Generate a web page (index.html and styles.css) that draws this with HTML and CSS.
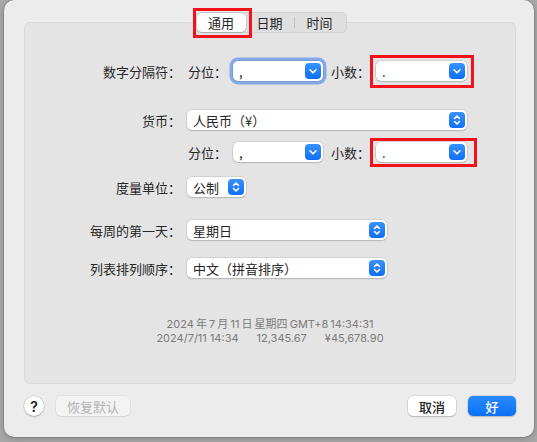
FILE: index.html
```html
<!DOCTYPE html>
<html lang="zh-CN">
<head>
    <meta charset="UTF-8">
    <meta name="viewport" content="width=device-width, initial-scale=1.0">
    <title>语言与地区 - 高级</title>
    <link rel="stylesheet" href="styles.css">
</head>
<body>

    <!-- Sheet -->
    <div class="sheet">

        <!-- Tabs -->
        <div class="tabs">
            <div class="tab tab-active mark">通用</div>
            <div class="tab">日期</div>
            <div class="tab-sep"></div>
            <div class="tab tab-last">时间</div>
        </div>

        <!-- Panel -->
        <div class="panel">

            <div class="row row-1">
                <div class="label">数字分隔符：</div>
                <div class="field">
                    <span class="sub">分位：</span>
                    <div class="select select-focus w-group">
                        <span class="val">,</span>
                        <span class="btn"><svg viewBox="0 0 16 16"><path d="M5 6.8l3 3 3-3"/></svg></span>
                    </div>
                    <span class="sub sub-dec">小数：</span>
                    <div class="select w-dec mark">
                        <span class="val">.</span>
                        <span class="btn"><svg viewBox="0 0 16 16"><path d="M5 6.8l3 3 3-3"/></svg></span>
                    </div>
                </div>
            </div>

            <div class="row row-2">
                <div class="label">货币：</div>
                <div class="field">
                    <div class="select w-currency">
                        <span class="val">人民币（¥）</span>
                        <span class="btn"><svg viewBox="0 0 16 16"><path d="M5.5 6.5L8 4l2.5 2.5M5.5 9.5L8 12l2.5-2.5"/></svg></span>
                    </div>
                </div>
            </div>

            <div class="row row-3">
                <div class="label"></div>
                <div class="field">
                    <span class="sub">分位：</span>
                    <div class="select w-group">
                        <span class="val">,</span>
                        <span class="btn"><svg viewBox="0 0 16 16"><path d="M5 6.8l3 3 3-3"/></svg></span>
                    </div>
                    <span class="sub sub-dec">小数：</span>
                    <div class="select w-dec mark mark-low">
                        <span class="val">.</span>
                        <span class="btn"><svg viewBox="0 0 16 16"><path d="M5 6.8l3 3 3-3"/></svg></span>
                    </div>
                </div>
            </div>

            <div class="row row-4">
                <div class="label">度量单位：</div>
                <div class="field">
                    <div class="select w-unit">
                        <span class="val">公制</span>
                        <span class="btn"><svg viewBox="0 0 16 16"><path d="M5.5 6.5L8 4l2.5 2.5M5.5 9.5L8 12l2.5-2.5"/></svg></span>
                    </div>
                </div>
            </div>

            <div class="row row-5">
                <div class="label">每周的第一天：</div>
                <div class="field">
                    <div class="select w-wide">
                        <span class="val">星期日</span>
                        <span class="btn"><svg viewBox="0 0 16 16"><path d="M5.5 6.5L8 4l2.5 2.5M5.5 9.5L8 12l2.5-2.5"/></svg></span>
                    </div>
                </div>
            </div>

            <div class="row row-6">
                <div class="label">列表排列顺序：</div>
                <div class="field">
                    <div class="select w-wide">
                        <span class="val">中文（拼音排序）</span>
                        <span class="btn"><svg viewBox="0 0 16 16"><path d="M5.5 6.5L8 4l2.5 2.5M5.5 9.5L8 12l2.5-2.5"/></svg></span>
                    </div>
                </div>
            </div>

            <!-- Preview -->
            <div class="preview">
                <div class="preview-line">2024 年 7 月 11 日 星期四 GMT+8 14:34:31</div>
                <div class="preview-line preview-split">
                    <span>2024/7/11 14:34</span>
                    <span>12,345.67</span>
                    <span>¥45,678.90</span>
                </div>
            </div>
        </div>

        <!-- Footer buttons -->
        <div class="footer">
            <button class="help">?</button>
            <button class="button button-disabled">恢复默认</button>
            <div class="spacer"></div>
            <button class="button">取消</button>
            <button class="button button-primary">好</button>
        </div>
    </div>

</body>
</html>
```

FILE: styles.css
```css
/* Body */
body {
    margin: 0;
    height: 442px;
    overflow: hidden;
    background-color: #a9a9a9;
    font-family: "Inter", "Noto Sans CJK SC", sans-serif;
    font-size: 13px;
    color: #262626;
}

/* Sheet window */
.sheet {
    display: flex;
    flex-direction: column;
    box-sizing: border-box;
    width: 530px;
    height: 437px;
    margin-left: 4px;
    padding: 12px 18px 21px 20px;
    background-color: #ececec;
    border-radius: 10px;
    box-shadow: 0 0 0 0.5px rgba(0, 0, 0, 0.25), 0 2px 8px rgba(0, 0, 0, 0.2);
}

/* Red highlight marks (square box drawn over the control) */
.mark {
    position: relative;
}

.mark::after {
    content: "";
    position: absolute;
    top: -6px;
    right: -7px;
    bottom: -7px;
    left: -6px;
    border: 3px solid #f4121a;
    pointer-events: none;
}

.mark-low::after {
    top: -4px;
    right: -10px;
    bottom: -5px;
}

.tab.mark::after {
    top: -5px;
    right: -6px;
    bottom: -6px;
    left: -4px;
}

/* Segmented tabs */
.tabs {
    position: relative;
    z-index: 1;
    display: flex;
    align-items: center;
    align-self: center;
    box-sizing: border-box;
    height: 21px;
    padding: 1px 2px;
    margin-left: 1px;
    background-color: #dfdfdf;
    border-radius: 6px;
    box-shadow: inset 0 0 0 0.5px rgba(0, 0, 0, 0.12);
}

.tab {
    width: 48px;
    height: 19px;
    line-height: 19px;
    text-align: center;
    font-family: "Noto Sans CJK SC", sans-serif;
}

.tab-active {
    width: 49px;
    background-color: #fff;
    border-radius: 5px;
    box-shadow: 0 0 0 0.5px rgba(0, 0, 0, 0.12), 0 1px 1px rgba(0, 0, 0, 0.12);
}

.tab-last {
    width: 50px;
}

.tab-sep {
    width: 1px;
    height: 11px;
    background-color: #c4c4c4;
}

/* Group panel */
.panel {
    flex: 1;
    margin: -11px 0 0 0;
    padding-top: 38px;
    background-color: #e4e4e4;
    border: 1px solid #d9d9d9;
    border-radius: 6px;
}

.row {
    display: flex;
    align-items: center;
    height: 20px;
}

.row-2 { margin-top: 29px; }
.row-3 { margin-top: 12px; }
.row-4 { margin-top: 15px; }
.row-5 { margin-top: 23px; }
.row-6 { margin-top: 18px; }

.label {
    width: 156px;
    flex-shrink: 0;
    text-align: right;
    font-family: "Noto Sans CJK SC", sans-serif;
    white-space: nowrap;
}

.field {
    display: flex;
    align-items: center;
    margin-left: 6px;
}

.sub {
    width: 39px;
    margin-left: 1px;
    margin-right: 6px;
    font-family: "Noto Sans CJK SC", sans-serif;
}

.sub-dec {
    margin-left: 8px;
}

/* Popup buttons */
.select {
    display: flex;
    align-items: center;
    justify-content: space-between;
    box-sizing: border-box;
    height: 20px;
    padding: 0 2px 0 6px;
    background-color: #fff;
    border-radius: 5px;
    box-shadow: 0 0 0 0.5px rgba(0, 0, 0, 0.16), 0 1px 1.5px rgba(0, 0, 0, 0.14);
}

.select-focus {
    box-shadow: 0 0 0 0.5px rgba(0, 0, 0, 0.16), 0 0 0 3.5px rgba(51, 122, 236, 0.55);
}

.val {
    font-family: "Noto Sans CJK SC", sans-serif;
    white-space: nowrap;
}

.btn {
    display: flex;
    width: 16px;
    height: 16px;
    border-radius: 4px;
    background: linear-gradient(#3a91fb, #0f70f7);
}

.btn svg {
    width: 16px;
    height: 16px;
    fill: none;
    stroke: #fff;
    stroke-width: 1.6;
    stroke-linecap: round;
    stroke-linejoin: round;
}

.w-group { width: 90px; }
.w-dec { width: 91px; }
.w-currency { width: 280px; }
.w-unit { width: 59px; }
.w-wide { width: 200px; }

/* Preview text */
.preview {
    margin-top: 39px;
    text-align: center;
    font-family: "Inter", "Noto Sans CJK SC", sans-serif;
    font-size: 11px;
    line-height: 14px;
    color: #7b7b7b;
}

.preview-line {
    word-spacing: -1px;
}

.preview-split {
    display: flex;
    justify-content: center;
    gap: 18px;
    word-spacing: 0;
}

/* Footer */
.footer {
    display: flex;
    align-items: center;
    gap: 12px;
    margin-top: 12px;
    height: 20px;
}

.spacer {
    flex: 1;
}

button {
    font-family: "Noto Sans CJK SC", sans-serif;
    font-size: 13px;
    border: none;
    margin: 0;
    padding: 0;
}

.help {
    width: 20px;
    height: 20px;
    border-radius: 50%;
    background-color: #fff;
    font-family: "Inter", sans-serif;
    font-size: 14px;
    font-weight: 600;
    color: #222;
    box-shadow: 0 0 0 0.5px rgba(0, 0, 0, 0.18), 0 1px 1.5px rgba(0, 0, 0, 0.18);
}

.button {
    width: 48px;
    height: 20px;
    border-radius: 5px;
    background-color: #fff;
    color: #222;
    font-weight: 500;
    box-shadow: 0 0 0 0.5px rgba(0, 0, 0, 0.16), 0 1px 1.5px rgba(0, 0, 0, 0.16);
}

.button-disabled {
    width: 74px;
    background-color: #f3f3f3;
    color: #b3b3b3;
    font-weight: 400;
    box-shadow: 0 0 0 0.5px rgba(0, 0, 0, 0.08), 0 1px 1px rgba(0, 0, 0, 0.06);
}

.button-primary {
    background: linear-gradient(#2a8afc, #0a70f6);
    color: #fff;
}
```
